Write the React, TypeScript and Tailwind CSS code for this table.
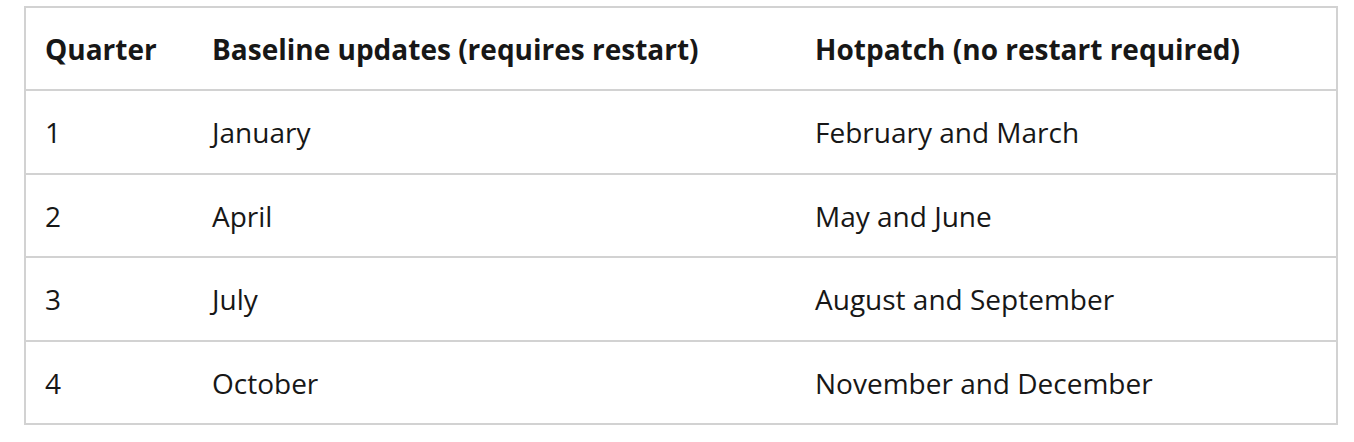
const rows = [
  ["1", "January", "February and March"],
  ["2", "April", "May and June"],
  ["3", "July", "August and September"],
  ["4", "October", "November and December"],
];

const heights = ["h-[84px]", "h-[83px]", "h-[84px]", "h-[81px]"];

export default function App() {
  return (
    <div className="w-[1354px] h-[442px] bg-white pt-[6px] pl-[24px] font-['Open_Sans',sans-serif] text-[#171717]">
      <div className="w-[1314px] border-2 border-[#d2d2d2]">
        <div className="grid grid-cols-[167px_603px_1fr] h-[83px] items-center border-b-2 border-[#d2d2d2] text-[28px] font-bold">
          <div className="pl-[19px]">Quarter</div>
          <div className="pl-[19px]">Baseline updates (requires restart)</div>
          <div className="pl-[19px]">Hotpatch (no restart required)</div>
        </div>
        {rows.map((r, i) => (
          <div
            key={r[0]}
            className={
              "grid grid-cols-[167px_603px_1fr] items-center text-[28px] " +
              heights[i] +
              (i < rows.length - 1 ? " border-b-2 border-[#d2d2d2]" : "")
            }
          >
            <div className="pl-[19px]">{r[0]}</div>
            <div className="pl-[19px]">{r[1]}</div>
            <div className="pl-[19px]">{r[2]}</div>
          </div>
        ))}
      </div>
    </div>
  );
}
